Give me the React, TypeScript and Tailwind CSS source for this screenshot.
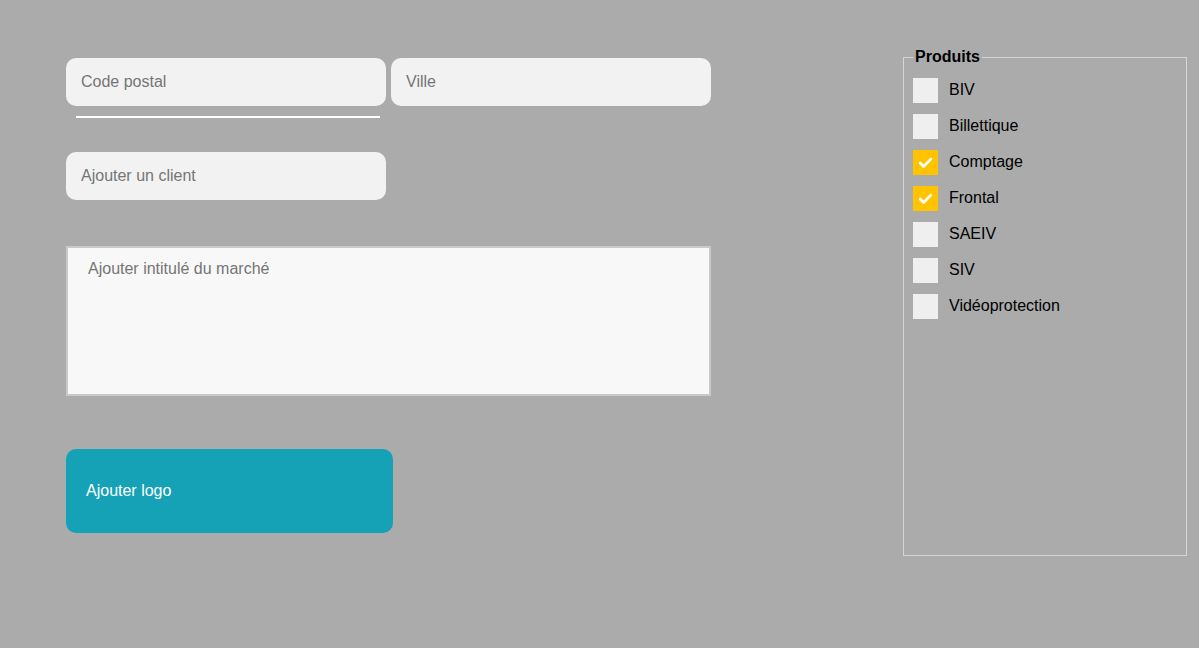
import {useState} from "react";

const products = ["BIV", "Billettique", "Comptage", "Frontal", "SAEIV", "SIV", "Vidéoprotection"];

export default function App() {
  const [checked, setChecked] = useState<Record<string, boolean>>({Comptage: true, Frontal: true});

  return (
    <div className="min-h-[648px] w-full bg-[#ababab] flex font-['Liberation_Sans',Arial,sans-serif] text-[16px]">
      {/* Form column */}
      <div className="ml-[66px] pt-[58px] w-[645px] flex flex-col">
        <div className="flex gap-[5px]">
          <input
            placeholder="Code postal"
            className="w-[320px] h-[48px] rounded-[10px] bg-[#f2f2f2] px-[15px] outline-none placeholder:text-[#757575]"
          />
          <input
            placeholder="Ville"
            className="w-[320px] h-[48px] rounded-[10px] bg-[#f2f2f2] px-[15px] outline-none placeholder:text-[#757575]"
          />
        </div>
        <div className="mt-[10px] ml-[10px] w-[304px] h-[2px] bg-white" />

        <input
          placeholder="Ajouter un client"
          className="mt-[34px] w-[320px] h-[48px] rounded-[10px] bg-[#f2f2f2] px-[15px] outline-none placeholder:text-[#757575]"
        />

        <textarea
          placeholder="Ajouter intitulé du marché"
          className="mt-[46px] w-[645px] h-[150px] border-2 border-[#c9c9c9] bg-[#f8f8f8] px-[20px] pt-[9px] resize-none outline-none placeholder:text-[#757575]"
        />

        <button className="mt-[53px] w-[327px] h-[84px] rounded-[10px] bg-[#16a2b6] text-white text-left px-[20px]">
          Ajouter logo
        </button>
      </div>

      {/* Produits */}
      <fieldset className="ml-auto mr-[12px] mt-[45px] w-[284px] h-[511px] border border-[#d6d6d6] px-[9px]">
        <legend className="px-[2px] font-bold text-black">Produits</legend>
        <div className="flex flex-col pt-[3px]">
          {products.map((p) => {
            const on = !!checked[p];
            return (
              <label key={p} className="flex items-center h-[36px] gap-[11px] cursor-pointer">
                <span
                  onClick={() => setChecked({...checked, [p]: !on})}
                  className={`w-[25px] h-[25px] flex items-center justify-center ${
                    on ? "bg-[#ffc300]" : "bg-[#efefef]"
                  }`}
                >
                  {on && (
                    <svg width="17" height="17" viewBox="0 0 16 16" fill="none">
                      <path d="M3 8.5l3.2 3.2L13 4.8" stroke="white" strokeWidth="2.6" strokeLinecap="round" strokeLinejoin="round" />
                    </svg>
                  )}
                </span>
                <span className="text-black">{p}</span>
              </label>
            );
          })}
        </div>
      </fieldset>
    </div>
  );
}
